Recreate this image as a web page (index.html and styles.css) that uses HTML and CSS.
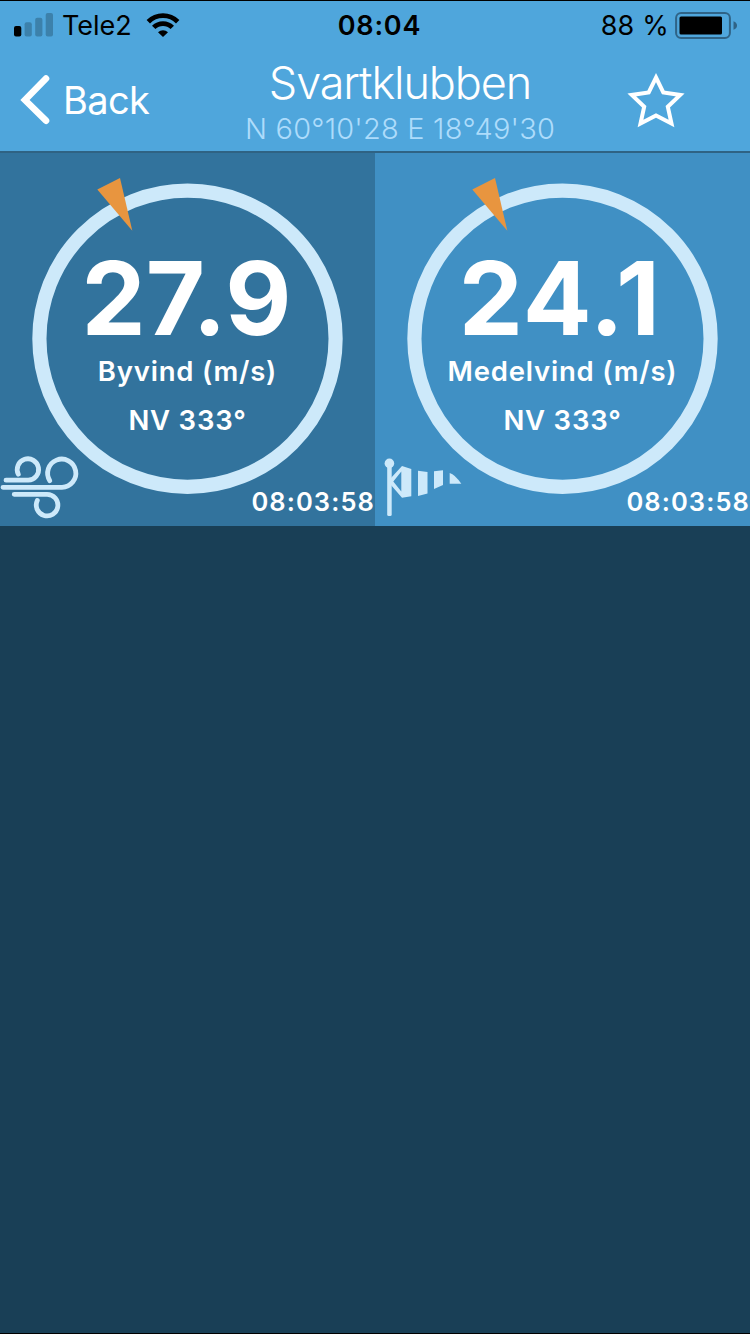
FILE: index.html
```html
<!DOCTYPE html>
<html lang="sv">
<head>
  <meta charset="utf-8">
  <title>Svartklubben</title>
  <link rel="stylesheet" href="styles.css">
</head>
<body>
  <div class="screen">
    <div class="statusbar">
      <div class="status-left">
        <svg class="signal" width="40" height="24" viewBox="0 0 40 24">
          <rect x="0" y="13" width="7.3" height="10.5" rx="2"/>
          <g fill="#3c81ab">
            <rect x="10.6" y="9.3" width="7.2" height="14.2" rx="2"/>
            <rect x="21.2" y="4.7" width="7.2" height="18.8" rx="2"/>
            <rect x="31.7" y="0" width="7.3" height="23.5" rx="2"/>
          </g>
        </svg>
        <span class="carrier">Tele2</span>
        <svg class="wifi" width="34" height="24" viewBox="0 0 34 24">
          <g fill="none" stroke="#000" stroke-width="4.8">
            <path d="M2.3 8.8A20.8 20.8 0 0 1 31.7 8.8"/>
            <path d="M7.7 14.4A13.2 13.2 0 0 1 26.3 14.4"/>
          </g>
          <path d="M12 19.2A7.2 7.2 0 0 1 22 19.2L17 24Z"/>
        </svg>
      </div>
      <div class="clock">08:04</div>
      <div class="status-right">
        <span class="percent">88 %</span>
        <svg class="battery" width="63" height="28" viewBox="0 0 63 28">
          <rect x="1.1" y="1.1" width="53.8" height="24.8" rx="5" fill="none" stroke="#2f6386" stroke-width="2"/>
          <rect x="4.5" y="4.5" width="42.5" height="18" rx="1.5"/>
          <path d="M58.5 9.2Q62 10.5 62 13.5T58.5 17.8Z" fill="#2f6386"/>
        </svg>
      </div>
    </div>

    <div class="navbar">
      <div class="back">
        <svg width="30" height="52" viewBox="0 0 30 52">
          <path d="M26 4.5L5 26L26 46.7" fill="none" stroke="#fff" stroke-width="6.6" stroke-linecap="round"/>
        </svg>
        <span>Back</span>
      </div>
      <div class="heading">
        <div class="title">Svartklubben</div>
        <div class="coords">N 60°10'28 E 18°49'30</div>
      </div>
      <div class="favorite">
        <svg width="60" height="60" viewBox="0 0 60 60">
          <path d="M30 7.5L37.3 22.5L54.2 25L41.8 36.7L45.5 53.5L30 45.5L14.5 53.5L18.2 36.7L5.8 25L22.7 22.5Z" fill="none" stroke="#fff" stroke-width="4"/>
        </svg>
      </div>
    </div>

    <div class="cards">
      <div class="card gust">
        <svg class="gauge" width="375" height="373" viewBox="0 0 375 373">
          <circle cx="187.5" cy="185.7" r="148.1" fill="none" stroke="#cde9fa" stroke-width="14.2"/>
          <path d="M97.3 36.5L120 25L132.3 77.7Z" fill="#e8953f"/>
        </svg>
        <div class="reading">
          <div class="value">27.9</div>
          <div class="label">Byvind (m/s)</div>
          <div class="direction">NV 333°</div>
        </div>
        <div class="card-footer">
          <svg width="90" height="72" viewBox="0 0 90 72">
            <g fill="none" stroke="#cde9fa" stroke-width="4.8" stroke-linecap="round">
              <path d="M6 26.2H28.3A10.7 10.7 0 1 0 18.3 20.2"/>
              <path d="M3 33.3H62A14.1 14.1 0 1 0 49.8 26.7"/>
              <path d="M14.2 40.3H47A10.8 10.8 0 1 1 37.3 46.5"/>
            </g>
          </svg>
          <span class="time">08:03:58</span>
        </div>
      </div>

      <div class="card mean">
        <svg class="gauge" width="375" height="373" viewBox="0 0 375 373">
          <circle cx="187.5" cy="185.7" r="148.1" fill="none" stroke="#cde9fa" stroke-width="14.2"/>
          <path d="M97.3 36.5L120 25L132.3 77.7Z" fill="#e8953f"/>
        </svg>
        <div class="reading">
          <div class="value">24.1</div>
          <div class="label">Medelvind (m/s)</div>
          <div class="direction">NV 333°</div>
        </div>
        <div class="card-footer">
          <svg width="90" height="72" viewBox="0 0 90 72">
            <g fill="#cde9fa">
              <circle cx="14.4" cy="9.4" r="4.8"/>
              <rect x="12.2" y="9" width="4.5" height="53" rx="1.5"/>
              <path d="M27 12L36.3 15V42.3L27 43.7L15.5 30.5V24.5ZM26.3 17.5L18.3 27.5L26.3 37.5Z" fill-rule="evenodd"/>
              <path d="M43 16.7L52.5 18V39.5L43 42Z"/>
              <path d="M59 17.3L68 16.3V31L59 35Z"/>
              <path d="M74.7 19Q80 20.5 86.3 29.8H74.7Z"/>
            </g>
          </svg>
          <span class="time">08:03:58</span>
        </div>
      </div>
    </div>
  </div>
</body>
</html>
```
FILE: styles.css
```css
* {
  box-sizing: border-box;
}
body {
  margin: 0;
  background-color: #193f56;
  color: #fff;
  font-family: Inter, "Liberation Sans", sans-serif;
}
svg {
  display: block;
}
.screen {
  height: 1334px;
  border-top: 1px solid #000;
  border-bottom: 1px solid #000;
  overflow: hidden;
}

/* status bar */
.statusbar {
  display: grid;
  grid-template-columns: 1fr auto 1fr;
  height: 49px;
  line-height: 50px;
  padding: 0 12px 0 14px;
  background-color: #4fa6dc;
  color: #000;
  white-space: nowrap;
}
.status-left,
.status-right {
  display: flex;
}
.status-right {
  justify-content: flex-end;
}
.signal {
  margin-top: 12px;
}
.carrier {
  width: 69px;
  margin: 0 15px 0 8px;
  font-size: 27px;
}
.wifi {
  margin-top: 12px;
}
.clock {
  padding-left: 7px;
  font-size: 27px;
  font-weight: 600;
  letter-spacing: 0.8px;
}
.percent {
  font-size: 27px;
  margin-right: 6px;
  letter-spacing: 0.2px;
}
.battery {
  margin-top: 11px;
}

/* navigation bar */
.navbar {
  display: grid;
  grid-template-columns: 225px 350px 175px;
  height: 103px;
  background-color: #4fa6dc;
  border-bottom: 2px solid rgba(0, 0, 0, 0.4);
  white-space: nowrap;
}
.back {
  display: flex;
  padding: 24px 0 0 20px;
  font-size: 38px;
  line-height: 52px;
  font-weight: 400;
  letter-spacing: -0.6px;
}
.back span {
  margin-left: 13px;
}
.heading {
  text-align: center;
}
.title {
  height: 56px;
  line-height: 66px;
  font-size: 45px;
  font-weight: 300;
  letter-spacing: -1.1px;
}
.coords {
  line-height: 46px;
  font-size: 29px;
  font-weight: 300;
  letter-spacing: 0.2px;
  color: #addcfb;
}
.favorite {
  padding: 20px 0 0 51px;
}

/* wind cards */
.cards {
  display: grid;
  grid-template-columns: 1fr 1fr;
}
.card {
  display: grid;
  height: 373px;
}
.card > * {
  grid-area: 1 / 1;
}
.gust {
  background-color: #32739d;
}
.mean {
  background-color: #4090c4;
}
.reading {
  padding-top: 96px;
  text-align: center;
  font-weight: 600;
}
.value {
  height: 98px;
  line-height: 98px;
  padding-right: 2px;
  font-size: 102px;
  font-weight: 700;
}
.mean .value {
  padding-right: 5px;
  letter-spacing: 1.4px;
}
.label,
.direction {
  font-size: 27.5px;
  line-height: 49px;
  letter-spacing: 0.8px;
}
.card-footer {
  display: flex;
  justify-content: space-between;
  align-items: flex-end;
  align-self: end;
}
.time {
  padding-bottom: 7px;
  font-size: 25.5px;
  font-weight: 600;
  line-height: 34px;
  letter-spacing: 1.1px;
}
```
